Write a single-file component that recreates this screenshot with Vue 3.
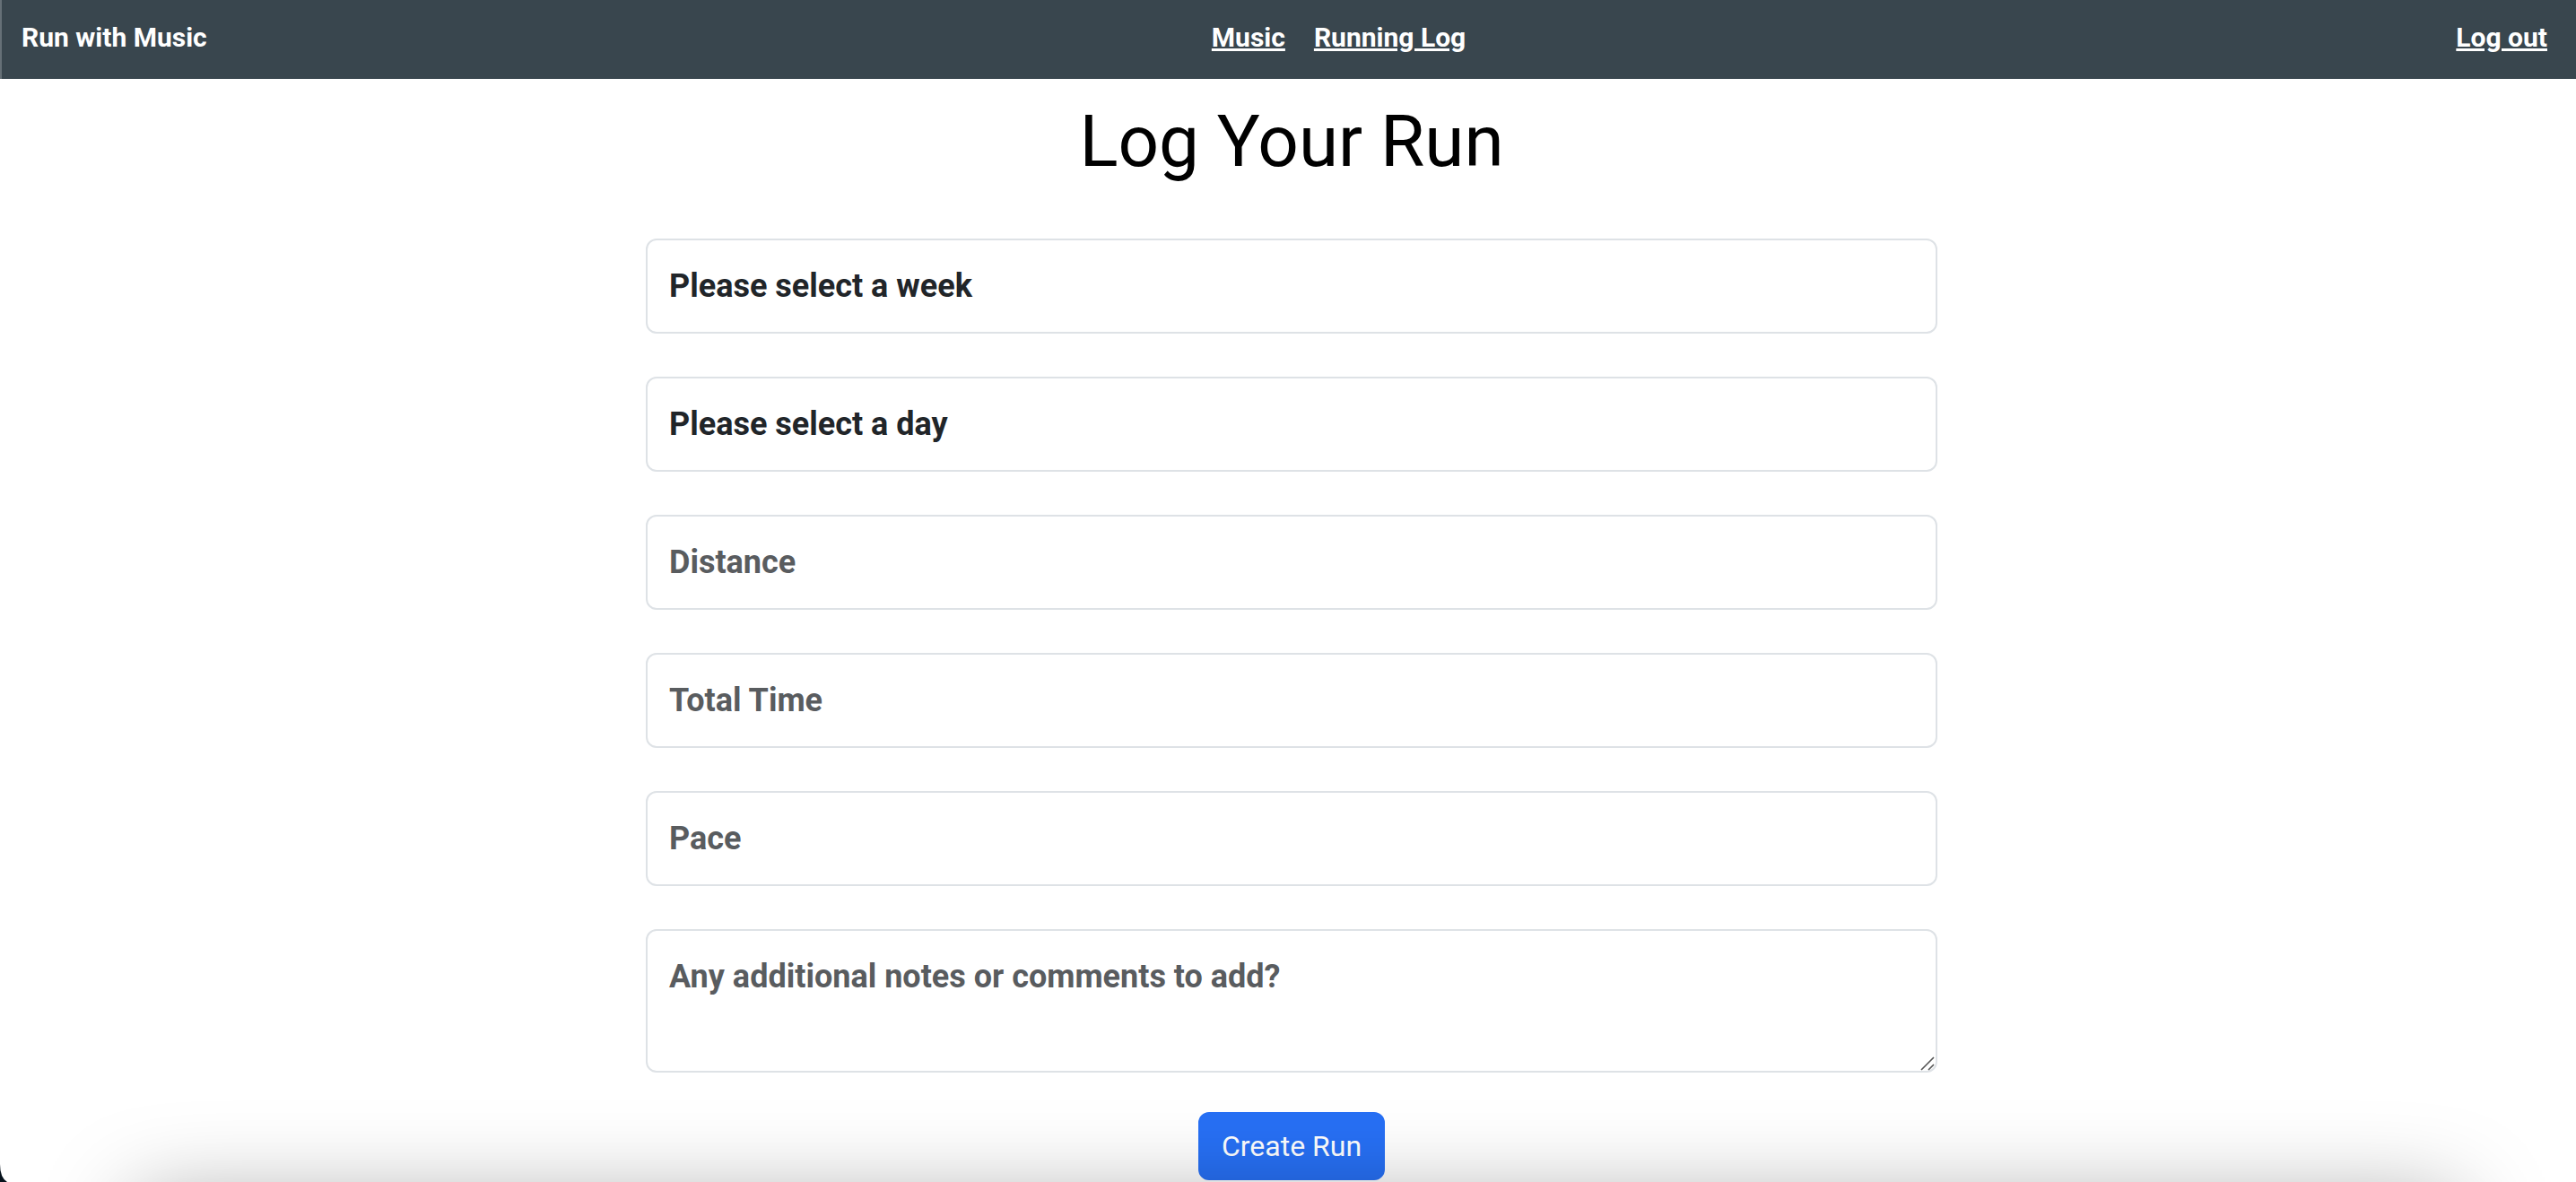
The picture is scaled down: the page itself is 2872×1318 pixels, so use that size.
<script setup>
import { reactive } from 'vue'

const run = reactive({ week: '', day: '', distance: '', time: '', pace: '', notes: '' })

const weeks = Array.from({ length: 9 }, (_, i) => `Week ${i + 1}`)
const days = ['Day 1', 'Day 2', 'Day 3']
</script>

<template>
  <div class="page">
    <nav class="navbar">
      <span class="brand">Run with Music</span>
      <div class="links">
        <a href="#music">Music</a>
        <a href="#log">Running Log</a>
      </div>
      <a href="#logout">Log out</a>
    </nav>

    <main class="content">
      <h1>Log Your Run</h1>
      <form class="form" @submit.prevent>
        <select v-model="run.week" class="field" aria-label="Week">
          <option value="">Please select a week</option>
          <option v-for="week in weeks" :key="week" :value="week">{{ week }}</option>
        </select>
        <select v-model="run.day" class="field" aria-label="Day">
          <option value="">Please select a day</option>
          <option v-for="day in days" :key="day" :value="day">{{ day }}</option>
        </select>
        <input v-model="run.distance" class="field" type="text" placeholder="Distance" aria-label="Distance" />
        <input v-model="run.time" class="field" type="text" placeholder="Total Time" aria-label="Total Time" />
        <input v-model="run.pace" class="field" type="text" placeholder="Pace" aria-label="Pace" />
        <div class="notes">
          <textarea
            v-model="run.notes"
            class="field"
            rows="2"
            placeholder="Any additional notes or comments to add?"
            aria-label="Notes"
          ></textarea>
          <svg class="grip" viewBox="0 0 16 16" aria-hidden="true">
            <path d="M1 15L15 1M9 15L15 9" />
          </svg>
        </div>
        <button class="submit" type="submit">Create Run</button>
      </form>
    </main>

    <div class="dock-shadow" aria-hidden="true"></div>
    <svg class="corner" viewBox="0 0 8 20" aria-hidden="true">
      <path d="M0 0Q0 15 8 20H0Z" />
    </svg>
  </div>
</template>

<style>
body {
  overflow: hidden;
  background: #fff;
}
</style>

<style scoped>
.page {
  font-family: Roboto, sans-serif;
  color: #000;
}

.navbar {
  display: flex;
  justify-content: space-between;
  box-sizing: border-box;
  height: 88px;
  padding: 20px 32px 0 22px;
  border-left: 2px solid #667077;
  background: #39464e;
  color: #fff;
  font-size: 30px;
  font-weight: 700;
  line-height: 44px;
}

.navbar a {
  color: inherit;
}

.links {
  display: flex;
  gap: 32px;
  margin-left: 16px;
}

.content {
  display: flex;
  flex-direction: column;
  align-items: center;
  padding: 22px 0 0 8px;
}

h1 {
  margin: 0 0 60px;
  font-size: 80px;
  font-weight: 400;
  line-height: 96px;
}

.form {
  display: flex;
  flex-direction: column;
  align-items: center;
  gap: 48px;
  width: 100%;
  max-width: 1440px;
}

.field {
  display: block;
  box-sizing: border-box;
  width: 100%;
  margin: 0;
  padding: 24px;
  border: 2px solid #dee2e6;
  border-radius: 12px;
  outline: none;
  appearance: none;
  background: #fff;
  color: #212529;
  font: 700 36px/54px Roboto, sans-serif;
}

input.field,
select.field {
  height: 106px;
}

textarea.field {
  height: 160px;
  resize: none;
}

.field::placeholder {
  color: #595c5f;
  opacity: 1;
}

.notes {
  position: relative;
  width: 100%;
}

.grip {
  position: absolute;
  right: 3px;
  bottom: 2px;
  width: 16px;
  height: 16px;
  fill: none;
  stroke: #555;
  stroke-width: 1.6;
}

.submit {
  margin-top: -4px;
  padding: 12px 24px;
  border: 2px solid #2770f5;
  border-radius: 12px;
  background: #2770f5;
  color: #fff;
  font: 400 32px/48px Roboto, sans-serif;
}

.dock-shadow {
  position: fixed;
  top: 100%;
  right: 132px;
  left: 150px;
  height: 300px;
  margin-top: 20px;
  box-shadow: 0 0 100px rgba(0, 0, 0, 0.35);
  pointer-events: none;
}

.corner {
  position: fixed;
  bottom: 0;
  left: 0;
  width: 8px;
  height: 20px;
  fill: #07121c;
}
</style>
